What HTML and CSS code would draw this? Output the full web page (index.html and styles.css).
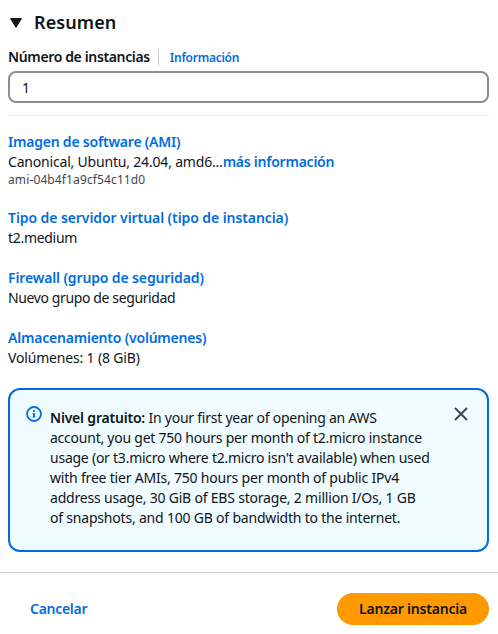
FILE: index.html
```html
<!DOCTYPE html>
<html lang="es">
<head>
<meta charset="utf-8">
<title>Resumen</title>
<link rel="stylesheet" href="styles.css">
</head>
<body>
<main class="summary">
  <header class="summary-header">
    <svg class="caret" viewBox="0 0 12 10" aria-hidden="true"><path d="M.6.6h10.8L6 9.4z" fill="currentColor" stroke="currentColor" stroke-linejoin="round"/></svg>
    <h2 class="title">Resumen</h2>
  </header>
  <div class="field-label">
    <label class="label" for="count">Número de instancias</label>
    <a class="info-link">Información</a>
  </div>
  <input class="input" id="count" type="text" value="1">
  <hr class="divider">
  <section class="item">
    <a class="link link-ami">Imagen de software (AMI)</a>
    <div class="ami-row"><span class="value value-ami">Canonical, Ubuntu, 24.04, amd6...</span><a class="link link-more">más información</a></div>
    <small class="ami-id">ami-04b4f1a9cf54c11d0</small>
  </section>
  <section class="item">
    <a class="link link-type">Tipo de servidor virtual (tipo de instancia)</a>
    <span class="value value-type">t2.medium</span>
  </section>
  <section class="item">
    <a class="link link-firewall">Firewall (grupo de seguridad)</a>
    <span class="value value-firewall">Nuevo grupo de seguridad</span>
  </section>
  <section class="item">
    <a class="link link-storage">Almacenamiento (volúmenes)</a>
    <span class="value">Volúmenes: 1 (8 GiB)</span>
  </section>
  <aside class="alert">
    <svg class="info-icon" viewBox="0 0 16 16" fill="none" stroke="currentColor" stroke-width="1.8" aria-hidden="true"><circle cx="8" cy="8" r="7"/><path d="M8 11V7M8 6V4"/><path d="M6.6 7.5H8M6.5 11h3" stroke-width="1"/></svg>
    <p class="alert-text"><strong class="alert-title">Nivel gratuito:</strong> In your first year of opening an AWS<br>account, you get 750 hours per month of t2.micro instance<br>usage (or t3.micro where t2.micro isn't available) when used<br><span class="tier-line">with free tier AMIs, 750 hours per month of public IPv4</span><br><span class="tier-line">address usage, 30 GiB of EBS storage, 2 million I/Os, 1 GB</span><br><span class="tier-line">of snapshots, and 100 GB of bandwidth to the internet.</span></p>
    <svg class="close-icon" viewBox="0 0 14 14" fill="none" stroke="currentColor" stroke-width="2" aria-hidden="true"><path d="M1 1l12 12M13 1L1 13"/></svg>
  </aside>
</main>
<footer class="actions">
  <a class="cancel">Cancelar</a>
  <button class="launch" type="button">Lanzar instancia</button>
</footer>
</body>
</html>
```

FILE: styles.css
```css
* {
  box-sizing: border-box;
}

body {
  margin: 0;
  background: #fff;
  color: #0f141a;
  font: 14px/20px "Noto Sans", sans-serif;
  white-space: nowrap;
}

.summary {
  height: 572px;
  padding: 10px 9px 0 8px;
}

.summary-header {
  display: flex;
  align-items: center;
  height: 24px;
  padding-left: 2px;
}

.caret {
  width: 12px;
  height: 10px;
  margin: 1px 12px 0 0;
}

.title {
  margin: 0;
  font-size: 18px;
  font-weight: 600;
  line-height: 24px;
  letter-spacing: 0.1px;
}

.field-label {
  display: flex;
  align-items: center;
  height: 20px;
  margin-top: 13px;
}

.label {
  font-weight: 600;
  letter-spacing: -0.36px;
}

.info-link {
  height: 16px;
  margin-left: 8px;
  padding-left: 11px;
  border-left: 1px solid #c6c6cd;
  color: #006ce0;
  font-size: 12px;
  font-weight: 600;
  line-height: 18px;
  letter-spacing: -0.26px;
}

.input {
  display: block;
  width: 100%;
  height: 32px;
  margin-top: 4px;
  padding: 0 12px;
  border: 2px solid #8c8c94;
  border-radius: 8px;
  background: #fff;
  color: #0f141a;
  font: inherit;
}

.divider {
  height: 1px;
  margin: 12px 0 16px;
  border: 0;
  background: #ebebf0;
}

.item {
  display: flex;
  flex-direction: column;
  align-items: flex-start;
  margin-bottom: 20px;
}

.link {
  color: #006ce0;
  font-weight: 600;
  letter-spacing: -0.21px;
}

.link-type {
  letter-spacing: -0.08px;
}

.link-firewall {
  letter-spacing: -0.13px;
}

.ami-row {
  display: flex;
}

.link-more {
  letter-spacing: -0.24px;
}

.value {
  letter-spacing: -0.17px;
}

.value-ami {
  letter-spacing: -0.19px;
}

.value-type {
  letter-spacing: -0.3px;
}

.value-firewall {
  letter-spacing: -0.38px;
}

.ami-id {
  color: #424650;
  font-size: 12px;
  line-height: 16px;
  letter-spacing: 0.12px;
}

.alert {
  display: flex;
  align-items: flex-start;
  height: 164px;
  padding: 18px 19px 0 16px;
  border: 2px solid #006ce0;
  border-radius: 12px;
  background: #f0fbff;
}

.info-icon {
  width: 16px;
  height: 16px;
  margin: -2px 8px 0 0;
  color: #006ce0;
}

.alert-text {
  flex: 1;
  margin: 0;
  letter-spacing: -0.24px;
}

.tier-line {
  letter-spacing: -0.2px;
}

.alert-title {
  font-weight: 600;
  letter-spacing: -0.2px;
}

.close-icon {
  width: 14px;
  height: 14px;
  margin-top: -1px;
  color: #424650;
}

.actions {
  display: flex;
  align-items: center;
  justify-content: space-between;
  height: 62px;
  padding: 10px 9px 0 30px;
  border-top: 1px solid #c6c6cd;
}

.cancel {
  color: #006ce0;
  font-weight: 600;
  letter-spacing: -0.28px;
}

.launch {
  width: 152px;
  height: 32px;
  padding: 0;
  border: 0;
  border-radius: 16px;
  background: #ff9900;
  color: #0f141a;
  font: inherit;
  font-weight: 600;
  letter-spacing: -0.2px;
}
```
